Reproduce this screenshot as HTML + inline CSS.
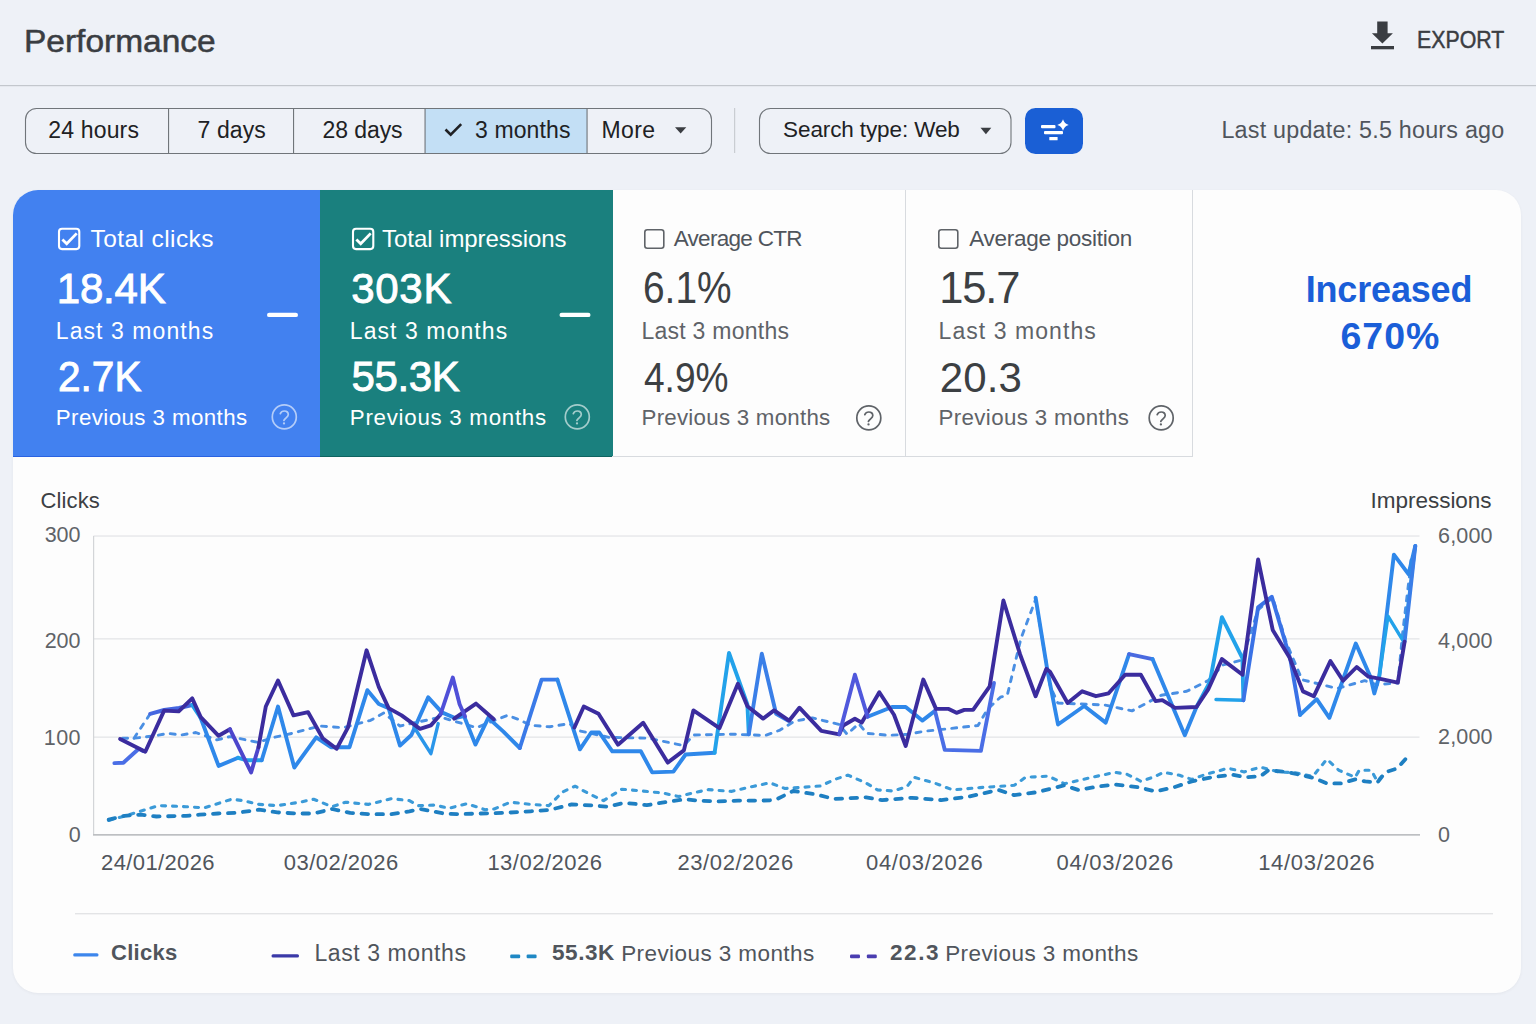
<!DOCTYPE html>
<html><head><meta charset="utf-8">
<style>
*{margin:0;padding:0;box-sizing:border-box}
html,body{width:1536px;height:1024px;overflow:hidden;background:#eef1f7;font-family:"Liberation Sans",sans-serif;color:#3c4043}
.abs{position:absolute}
.t{position:absolute;white-space:nowrap;line-height:1}
</style></head><body>
<svg class="abs" style="left:0;top:0" width="1536" height="190" viewBox="0 0 1536 190">
<path d="M1377.2 21.6h10.4v11.6h5.3l-10.5 10.2-10.5-10.2h5.3z" fill="#3a3d42"/>
<rect x="1371" y="46" width="23" height="3.3" fill="#3a3d42"/>
<rect x="0" y="85" width="1536" height="1.2" fill="#c3c7cd"/>
<rect x="25.5" y="108.5" width="686" height="45" rx="11" fill="none" stroke="#70757a" stroke-width="1.1"/>
<rect x="425" y="109" width="162" height="44" fill="#c3dff5"/>
<rect x="168" y="108.5" width="1.1" height="45" fill="#70757a"/>
<rect x="293" y="108.5" width="1.1" height="45" fill="#70757a"/>
<rect x="424.5" y="108.5" width="1.1" height="45" fill="#70757a"/>
<rect x="586.5" y="108.5" width="1.1" height="45" fill="#70757a"/>
<path d="M445.5 129.5l5.2 5.2 10.5-10.5" stroke="#202124" stroke-width="2.6" fill="none"/>
<path d="M675 127.2h11.3l-5.65 6.4z" fill="#3a3d42"/>
<rect x="734" y="108" width="1.2" height="45" fill="#c9cdd2"/>
<rect x="759.5" y="108.5" width="251.5" height="45" rx="11" fill="none" stroke="#70757a" stroke-width="1.1"/>
<path d="M980.5 127.8h10.8l-5.4 6.4z" fill="#3a3d42"/>
<rect x="1025" y="108" width="58" height="46" rx="10.5" fill="#1a5fd5"/>
<rect x="1041" y="125" width="14.5" height="3.3" rx="1" fill="#fff"/>
<rect x="1044" y="131.1" width="19" height="3.2" rx="1" fill="#fff"/>
<rect x="1049.3" y="137" width="8.3" height="3.2" rx="0.5" fill="#fff"/>
<path d="M1063 119.3Q1064.3 123.7 1068.7 125Q1064.3 126.3 1063 130.7Q1061.7 126.3 1057.3 125Q1061.7 123.7 1063 119.3z" fill="#fff"/>
</svg>
<div class="abs" style="left:13px;top:190px;width:1508px;height:803px;background:#fdfdfd;border-radius:25px;overflow:hidden;box-shadow:0 1px 3px rgba(60,64,67,0.06)">
<div class="abs" style="left:0;top:0;width:307px;height:267px;background:#4281f0;border-bottom:1.5px solid #2a62e0"></div>
<div class="abs" style="left:307px;top:0;width:292.5px;height:267px;background:#1a807e;border-bottom:1.5px solid #0f6461"></div>
<div class="abs" style="left:599px;top:0;width:581px;height:267px;border-right:1.3px solid #d8dbdf;border-bottom:1.3px solid #d8dbdf"></div>
<div class="abs" style="left:891.5px;top:0;width:1.3px;height:267px;background:#d8dbdf"></div>
</div>
<svg class="abs" style="left:55.6px;top:225px" width="26" height="28" viewBox="55.6 225 26 28"><rect x="58.6" y="228.8" width="20.3" height="20.3" rx="3" fill="none" stroke="#fff" stroke-width="2.1"/><path d="M62.0 239.6l4.3 4.2 10-10.4" stroke="#fff" stroke-width="2.8" fill="none"/></svg>
<svg class="abs" style="left:350.3px;top:225px" width="26" height="28" viewBox="350.3 225 26 28"><rect x="353.3" y="228.8" width="20.3" height="20.3" rx="3" fill="none" stroke="#fff" stroke-width="2.1"/><path d="M356.7 239.6l4.3 4.2 10-10.4" stroke="#fff" stroke-width="2.8" fill="none"/></svg>
<svg class="abs" style="left:641.6px;top:225px" width="26" height="28" viewBox="641.6 225 26 28"><rect x="644.4" y="229.8" width="19" height="18.5" rx="2.5" fill="none" stroke="#5f6368" stroke-width="1.6"/></svg>
<svg class="abs" style="left:936.3px;top:225px" width="26" height="28" viewBox="936.3 225 26 28"><rect x="939.0999999999999" y="229.8" width="19" height="18.5" rx="2.5" fill="none" stroke="#5f6368" stroke-width="1.6"/></svg>
<svg class="abs" style="left:0;top:190px" width="1536" height="270" viewBox="0 190 1536 270">
<rect x="267" y="312.7" width="31" height="4.4" rx="2.2" fill="#fff"/>
<rect x="559.5" y="312.7" width="31" height="4.4" rx="2.2" fill="#fff"/>
<circle cx="284.3" cy="416.9" r="12" fill="none" stroke="rgba(255,255,255,0.6)" stroke-width="1.7"/>
<path transform="translate(284.3,416.9)" d="M-4,-3.3C-3.2,-5.2 -1.6,-5.9 0,-5.9C2.4,-5.9 4,-4.3 4,-2.4C4,-0.5 2.2,0.6 1,1.8C0.2,2.6 -0.3,3.2 -0.4,3.6" fill="none" stroke="rgba(255,255,255,0.6)" stroke-width="1.7" stroke-linecap="round"/><circle cx="284.0" cy="423.4" r="1.15" fill="rgba(255,255,255,0.6)"/>
<circle cx="577.3" cy="416.9" r="12" fill="none" stroke="rgba(255,255,255,0.6)" stroke-width="1.7"/>
<path transform="translate(577.3,416.9)" d="M-4,-3.3C-3.2,-5.2 -1.6,-5.9 0,-5.9C2.4,-5.9 4,-4.3 4,-2.4C4,-0.5 2.2,0.6 1,1.8C0.2,2.6 -0.3,3.2 -0.4,3.6" fill="none" stroke="rgba(255,255,255,0.6)" stroke-width="1.7" stroke-linecap="round"/><circle cx="577.0" cy="423.4" r="1.15" fill="rgba(255,255,255,0.6)"/>
<circle cx="868.8" cy="417.9" r="12" fill="none" stroke="#5f6368" stroke-width="1.7"/>
<path transform="translate(868.8,417.9)" d="M-4,-3.3C-3.2,-5.2 -1.6,-5.9 0,-5.9C2.4,-5.9 4,-4.3 4,-2.4C4,-0.5 2.2,0.6 1,1.8C0.2,2.6 -0.3,3.2 -0.4,3.6" fill="none" stroke="#5f6368" stroke-width="1.7" stroke-linecap="round"/><circle cx="868.5" cy="424.4" r="1.15" fill="#5f6368"/>
<circle cx="1161.2" cy="417.9" r="12" fill="none" stroke="#5f6368" stroke-width="1.7"/>
<path transform="translate(1161.2,417.9)" d="M-4,-3.3C-3.2,-5.2 -1.6,-5.9 0,-5.9C2.4,-5.9 4,-4.3 4,-2.4C4,-0.5 2.2,0.6 1,1.8C0.2,2.6 -0.3,3.2 -0.4,3.6" fill="none" stroke="#5f6368" stroke-width="1.7" stroke-linecap="round"/><circle cx="1160.9" cy="424.4" r="1.15" fill="#5f6368"/>
</svg>
<svg class="abs" style="left:0;top:0" width="1536" height="1024" viewBox="0 0 1536 1024">
<rect x="93.5" y="535.4" width="1326" height="1.3" fill="#e4e5e8"/>
<rect x="93.5" y="638.1999999999999" width="1326" height="1.3" fill="#e4e5e8"/>
<rect x="93.5" y="736.5" width="1326" height="1.3" fill="#e4e5e8"/>
<rect x="93" y="536" width="1.2" height="299" fill="#d3d5d8"/>
<rect x="93" y="834" width="1327" height="1.7" fill="#bdbfc2"/>
<rect x="75" y="913" width="1418" height="1.4" fill="#e3e4e6"/>
<polyline points="108.7,820.4 129.2,814.7 158.8,805.6 186.1,806.7 204.4,807.8 231.7,799.2 243.1,800.6 259,804.4 277.3,805.6 300.1,802.2 313.7,799.2 332,806.7 345.6,802.2 368.4,804.4 391.2,798.7 409.4,800.6 418.5,805.6 435,805.1 448.7,808.3 466.9,803.7 485.1,809.7 494.2,809 510.2,802.2 530.7,804.4 548.9,805.6 562.6,791.9 575.1,786.2 589.9,794.2 603.6,800.6 621.8,789.2 640.1,790.8 662.8,793 678.8,796.5 692.5,793 708.4,789.6 731.2,791.4 754,786.2 769.9,782.8 785,788.5 797.8,787.6 820.6,786 834.2,779.6 847.9,775.1 866.1,783 877.5,789.9 893.5,791 907.1,786.5 914,777.3 934.5,783 952.7,789.9 980.1,787.6 1014.2,785.3 1025.6,777.3 1048.4,776.2 1064.4,783.7 1094,776.9 1115,772.3 1127.1,774.3 1141.2,781.4 1155.4,776.3 1163.4,772.3 1179.6,775.3 1191.7,779.4 1205.8,774.3 1228,768.3 1244.2,771.9 1260.3,767.2 1278.5,771.9 1294.6,772.7 1312.8,776.3 1326.9,759.2 1339,770.3 1355.2,777.3 1359.2,770.3 1371.3,770.3 1377.4,781.4 1385.4,772.3" fill="none" stroke="#3b9ad8" stroke-width="3.1" stroke-linejoin="round" stroke-linecap="round" stroke-dasharray="4 7" opacity="1"/>
<polyline points="108.7,819.7 124.6,815.8 140.6,814.7 156.5,816.5 186.1,815.8 199.8,814.7 218,813.5 236.3,812.9 259,809.7 277.3,812.4 295.5,813.5 313.7,813.5 332,809 350.2,812.9 368.4,814.2 391.2,814.2 409.4,811.3 420.8,809 443.6,813.5 457.8,814.2 480.6,813.5 503.4,812.9 530.7,811.3 548.9,810.1 571.7,804.4 594.5,805.6 608.2,806.7 624.1,802.8 646.9,805.1 669.7,801.5 685.6,799.2 697,800.6 717.5,801.5 738,800.6 760.8,800.6 775,800.1 793.2,791 816,794.4 834.2,799 866.1,797.4 882.1,800.1 911.7,797.8 941.3,800.1 968.7,796.7 998.3,789.9 1014.2,795.1 1037,792.2 1064.4,785.3 1078,789.9 1098.5,786.5 1115,784.4 1139.2,787.4 1155.4,791.5 1173.5,787.4 1191.7,781.4 1211.9,777.3 1232.1,774.7 1246.2,777.3 1260.3,776.3 1268.4,770.3 1286.5,771.9 1306.7,776.3 1314.8,778.3 1326.9,783.4 1341,783.4 1355.2,779.4 1365.3,781.4 1377.4,782.4 1385.4,772.3 1397.5,768.3 1409.7,754.1" fill="none" stroke="#1e7fc2" stroke-width="3.8" stroke-linejoin="round" stroke-linecap="round" stroke-dasharray="6.5 8.5" opacity="1"/>
<polyline points="122.6,738.2 134,738.2 155.1,735.8 168.1,733.4 181.1,735 195.8,732.5 217,739.9 230,736.6 257.6,742.3 273.9,737.4 291.8,733.4 319.5,726 343,727.7 370.7,720.3 383.7,713 400,726 440.7,717.1 465.1,724.4 476.5,727.7 492.8,721.1 507.4,715.4 518.8,719.5 530.2,725.2 549.7,726.8 569.3,723.6 579.8,730.9 609,737.4 648.1,738.2 683.9,745.6 693.7,735 732.8,734.2 765.3,735.5 780,730.1 794.6,721.1 812.5,717.9 839.3,724.5 847.1,734.3 858.8,723.6 866.6,733.3 888.1,735.3 907.7,734.3 923.3,731.4 978,725.5 987.7,708.9 1000.4,697.2 1007.3,695.2 1020.9,638.6 1035.6,599.5 1050.2,686.4 1057.8,703 1104.7,705 1132,710.9 1161.3,695.2 1186.7,691.3 1208.2,680.6 1222.9,665 1242,660 1258,610 1272.7,597.6 1286.3,642.5 1302,679.7 1337.2,688.5 1364.6,680.7 1376.3,684.6 1398,683 1402.3,636 1409.8,573 1411,560" fill="none" stroke="#4a8fe3" stroke-width="2.9" stroke-linejoin="round" stroke-linecap="round" stroke-dasharray="5 7" opacity="1"/>
<polyline points="134,738.2 150.2,713.8" fill="none" stroke="#4a8fe3" stroke-width="2.9" stroke-linejoin="round" stroke-linecap="round" stroke-dasharray="5 7" opacity="1"/>
<polyline points="1216,699.5 1243.4,700.2" fill="none" stroke="#22a2ea" stroke-width="3.4" stroke-linejoin="round" stroke-linecap="round" opacity="1"/>
<polyline points="114.4,763.1 123.4,762.7 138.8,748.8 143,751" fill="none" stroke="#4a6ee6" stroke-width="3.9" stroke-linejoin="round" stroke-linecap="round" opacity="1"/>
<polyline points="150.2,713.8 164.1,710.0 179.0,708.0 192.2,705.0" fill="none" stroke="#4566e0" stroke-width="3.9" stroke-linejoin="round" stroke-linecap="round" opacity="1"/>
<polyline points="192.2,705.0 200.7,718.0" fill="none" stroke="#22a0ea" stroke-width="3.9" stroke-linejoin="round" stroke-linecap="round" opacity="1"/>
<polyline points="200.7,718.0 218.6,765.9 238.1,757.8" fill="none" stroke="#2f88ea" stroke-width="3.9" stroke-linejoin="round" stroke-linecap="round" opacity="1"/>
<polyline points="238.1,757.8 246.2,760.2 261.7,760.2" fill="none" stroke="#22a0ea" stroke-width="3.9" stroke-linejoin="round" stroke-linecap="round" opacity="1"/>
<polyline points="261.7,760.2 278.0,706.5 294.3,767.5 316.2,737.4 330.9,747.2 349.5,747.2 367.4,690.2 378.8,704.0 388.6,708.1 400.0,745.6 411.4,735.0 428.2,697.4 441.9,712.4 455.0,718.0 464.0,716.0 475.4,744.6 488.3,717.9 503.4,731.6 519.8,748.0" fill="none" stroke="#2f88ea" stroke-width="3.9" stroke-linejoin="round" stroke-linecap="round" opacity="1"/>
<polyline points="519.8,748.0 541.6,679.6 557.4,679.6" fill="none" stroke="#3a7ae8" stroke-width="3.9" stroke-linejoin="round" stroke-linecap="round" opacity="1"/>
<polyline points="557.4,679.6 579.9,749.3 591.2,732.5 599.3,732.5 612.3,751.3 640.8,751.3 652.2,772.4 673.4,771.6 685.6,754.5 714.6,752.8" fill="none" stroke="#2f88ea" stroke-width="3.9" stroke-linejoin="round" stroke-linecap="round" opacity="1"/>
<polyline points="714.6,752.8 729.0,653.0 747.4,704.3 748.8,734.3" fill="none" stroke="#22a2ea" stroke-width="3.9" stroke-linejoin="round" stroke-linecap="round" opacity="1"/>
<polyline points="748.8,734.3 761.8,653.7 776.1,713.8 788.4,720.7" fill="none" stroke="#3a7fe8" stroke-width="3.9" stroke-linejoin="round" stroke-linecap="round" opacity="1"/>
<polyline points="867.6,716.7 892.0,707.0 905.7,707.0 922.3,720.6 935.0,710.9" fill="none" stroke="#2f88ea" stroke-width="3.9" stroke-linejoin="round" stroke-linecap="round" opacity="1"/>
<polyline points="935.0,710.9 944.8,749.9 980.9,750.9 994.0,683.0" fill="none" stroke="#4a6ee6" stroke-width="3.9" stroke-linejoin="round" stroke-linecap="round" opacity="1"/>
<polyline points="1035.6,597.6 1047.3,669.8 1058.0,724.5 1084.2,706.0 1105.7,722.6 1129.1,654.2" fill="none" stroke="#2f88ea" stroke-width="3.9" stroke-linejoin="round" stroke-linecap="round" opacity="1"/>
<polyline points="1129.1,654.2 1152.5,659.1" fill="none" stroke="#4a6ae0" stroke-width="3.9" stroke-linejoin="round" stroke-linecap="round" opacity="1"/>
<polyline points="1152.5,659.1 1184.8,735.3 1196.5,707.0" fill="none" stroke="#2f88ea" stroke-width="3.9" stroke-linejoin="round" stroke-linecap="round" opacity="1"/>
<polyline points="1196.5,707.0 1210.0,681.6 1221.9,617.1 1242.4,658.1 1243.4,700.2" fill="none" stroke="#22a2ea" stroke-width="3.9" stroke-linejoin="round" stroke-linecap="round" opacity="1"/>
<polyline points="1243.4,700.2 1258.1,607.4 1271.8,596.7 1290.3,659.2 1300.1,714.8" fill="none" stroke="#3a72e6" stroke-width="3.9" stroke-linejoin="round" stroke-linecap="round" opacity="1"/>
<polyline points="1300.1,714.8 1316.7,699.2 1329.4,717.8 1355.8,643.5 1370.4,676.7 1374.3,693.4 1379.2,676.7 1393.9,554.7 1408.5,574.2 1415.3,545.9" fill="none" stroke="#2f88ea" stroke-width="3.9" stroke-linejoin="round" stroke-linecap="round" opacity="1"/>
<polyline points="1379.2,676.7 1388,616.2 1403.6,641.6 1415.3,545.9" fill="none" stroke="#22a2ea" stroke-width="3.4" stroke-linejoin="round" stroke-linecap="round" opacity="1"/>
<polyline points="1404.6,641.6 1415.3,545.9" fill="none" stroke="#3a7ee8" stroke-width="3.9" stroke-linejoin="round" stroke-linecap="round" opacity="1"/>
<polyline points="414,727 430.9,753.7 438.2,723.6" fill="none" stroke="#2a96ea" stroke-width="3.4" stroke-linejoin="round" stroke-linecap="round" opacity="1"/>
<polyline points="120.1,739.0 145.3,751.7 164.1,710.6 178.7,711.4 192.2,698.4 200.7,717.1 218.6,735.8 230.0,729.3" fill="none" stroke="#3b2c9e" stroke-width="3.9" stroke-linejoin="round" stroke-linecap="round" opacity="1"/>
<polyline points="230.0,729.3 251.1,772.4 258.5,747.2" fill="none" stroke="#4d46cc" stroke-width="3.9" stroke-linejoin="round" stroke-linecap="round" opacity="1"/>
<polyline points="258.5,747.2 265.8,706.5 278.0,680.5 293.5,715.4 308.1,712.2 322.7,738.2 336.6,748.8 347.9,727.7 366.6,650.3 378.8,687.0 388.6,708.1 401.6,715.4 420.0,728.8 430.9,725.4 440.5,714.5" fill="none" stroke="#3b2c9e" stroke-width="3.9" stroke-linejoin="round" stroke-linecap="round" opacity="1"/>
<polyline points="454.2,718.6 476,703.6 493.8,719.3" fill="none" stroke="#3b2c9e" stroke-width="3.9" stroke-linejoin="round" stroke-linecap="round" opacity="1"/>
<polyline points="574.4,727.5 583.8,706.5 598.5,713.8 618,744.7 643.2,722.8 667.7,762.6 683.9,750.4 693.4,710.4 719.4,728.2 737.9,683.8 747.4,706.3 763.1,718.6 774.1,710.4 789.1,720.7 799.4,707.7 821.3,730.9 839.3,734.3 843.2,725.5 854.9,718.7 861.8,722.6 879.3,692.3 894,714.8 905.7,746 923.3,679.6 936,708.9 948.7,708.9 956.5,712.8 964.3,709.9 973.1,709.9 989.7,686.4 1003.4,600.5 1020,654.2 1035.6,696.2 1046.3,668.9 1050,671.8 1067.6,703 1082.2,691.3 1095.9,696.2 1108.6,693.3 1125.2,674.7 1140.8,674.7 1155.5,701.1 1162.3,700.1 1175,707.9 1196.5,707 1208.2,689.4 1221.9,659.1 1242.5,674.8 1258.1,559.5 1272.7,629.9 1289.4,657.2 1303,691.4 1313.8,696.3 1330.4,661.1 1343.1,680.7 1356.7,667 1368.5,676.7 1379.2,678.7 1397.8,682.6 1404.6,641.6" fill="none" stroke="#3b2c9e" stroke-width="3.9" stroke-linejoin="round" stroke-linecap="round" opacity="1"/>
<polyline points="440.5,714.5 452.8,677.6 459.6,704.2 465.1,716.5" fill="none" stroke="#5050d8" stroke-width="3.9" stroke-linejoin="round" stroke-linecap="round" opacity="1"/>
<polyline points="839.3,734.3 854.9,674.7 867.6,716.7" fill="none" stroke="#5058dc" stroke-width="3.9" stroke-linejoin="round" stroke-linecap="round" opacity="1"/>
<rect x="73.2" y="953.3" width="25.3" height="3.2" rx="1.5" fill="#3d86ec"/>
<rect x="271.5" y="954.3" width="27.5" height="3.2" rx="1.5" fill="#3b3aa8"/>
<rect x="510.2" y="954.5" width="10" height="3.8" rx="1.2" fill="#1f88c4"/><rect x="526.6" y="954.5" width="10" height="3.8" rx="1.2" fill="#1f88c4"/>
<rect x="850" y="954.5" width="10" height="3.8" rx="1.2" fill="#4a3db0"/><rect x="866.8" y="954.5" width="10" height="3.8" rx="1.2" fill="#4a3db0"/>
</svg>
<div class="t" style="left:23.9px;top:26.2px;font-size:31px;font-weight:normal;color:#3a3d42;letter-spacing:0.0px;transform:scaleX(1.08);transform-origin:0 0;-webkit-text-stroke:0.5px #3a3d42;">Performance</div>
<div class="t" style="left:1416.6px;top:28.8px;font-size:23px;font-weight:normal;color:#3a3d42;letter-spacing:0.0px;-webkit-text-stroke:0.45px #3a3d42;transform:scaleX(0.927);transform-origin:0 0;">EXPORT</div>
<div class="t" style="left:48.3px;top:118.8px;font-size:23px;font-weight:normal;color:#202124;letter-spacing:0.163px;">24 hours</div>
<div class="t" style="left:197.6px;top:118.8px;font-size:23px;font-weight:normal;color:#202124;letter-spacing:0.096px;">7 days</div>
<div class="t" style="left:322.6px;top:118.8px;font-size:23px;font-weight:normal;color:#202124;letter-spacing:-0.09px;">28 days</div>
<div class="t" style="left:475.0px;top:118.8px;font-size:23px;font-weight:normal;color:#202124;letter-spacing:0.11px;">3 months</div>
<div class="t" style="left:601.5px;top:118.8px;font-size:23px;font-weight:normal;color:#202124;letter-spacing:0.36px;">More</div>
<div class="t" style="left:783.1px;top:119.2px;font-size:22.5px;font-weight:normal;color:#202124;letter-spacing:-0.114px;">Search type: Web</div>
<div class="t" style="left:1221.4px;top:119.3px;font-size:23.3px;font-weight:normal;color:#50555c;letter-spacing:0.226px;">Last update: 5.5 hours ago</div>
<div class="t" style="left:90.6px;top:227.0px;font-size:24.5px;font-weight:normal;color:#ffffff;letter-spacing:0.402px;">Total clicks</div>
<div class="t" style="left:56.8px;top:267.8px;font-size:42px;font-weight:normal;color:#ffffff;letter-spacing:-0.21px;-webkit-text-stroke:0.9px #ffffff;">18.4K</div>
<div class="t" style="left:55.8px;top:319.6px;font-size:23px;font-weight:normal;color:#ffffff;letter-spacing:1.076px;">Last 3 months</div>
<div class="t" style="left:57.7px;top:355.8px;font-size:42px;font-weight:normal;color:#ffffff;letter-spacing:0.0px;-webkit-text-stroke:0.9px #ffffff;transform:scaleX(0.9659);transform-origin:0 0;">2.7K</div>
<div class="t" style="left:55.8px;top:406.6px;font-size:22.3px;font-weight:normal;color:#ffffff;letter-spacing:0.421px;">Previous 3 months</div>
<div class="t" style="left:382.1px;top:227.4px;font-size:24px;font-weight:normal;color:#ffffff;letter-spacing:-0.057px;">Total impressions</div>
<div class="t" style="left:351.2px;top:267.8px;font-size:42px;font-weight:normal;color:#ffffff;letter-spacing:0.72px;-webkit-text-stroke:0.9px #ffffff;">303K</div>
<div class="t" style="left:349.8px;top:319.6px;font-size:23px;font-weight:normal;color:#ffffff;letter-spacing:1.076px;">Last 3 months</div>
<div class="t" style="left:351.6px;top:355.8px;font-size:42px;font-weight:normal;color:#ffffff;letter-spacing:-0.374px;-webkit-text-stroke:0.9px #ffffff;">55.3K</div>
<div class="t" style="left:349.8px;top:406.6px;font-size:22.3px;font-weight:normal;color:#ffffff;letter-spacing:0.73px;">Previous 3 months</div>
<div class="t" style="left:673.7px;top:227.6px;font-size:22.5px;font-weight:normal;color:#50555c;letter-spacing:-0.708px;">Average CTR</div>
<div class="t" style="left:643.2px;top:266.8px;font-size:43.5px;font-weight:normal;color:#3c4043;letter-spacing:0.0px;transform:scaleX(0.8938);transform-origin:0 0;">6.1%</div>
<div class="t" style="left:641.5px;top:319.6px;font-size:23px;font-weight:normal;color:#5f6368;letter-spacing:0.251px;">Last 3 months</div>
<div class="t" style="left:643.6px;top:356.8px;font-size:42px;font-weight:normal;color:#3c4043;letter-spacing:0.0px;transform:scaleX(0.8828);transform-origin:0 0;">4.9%</div>
<div class="t" style="left:641.5px;top:406.6px;font-size:22.3px;font-weight:normal;color:#5f6368;letter-spacing:0.255px;">Previous 3 months</div>
<div class="t" style="left:969.2px;top:227.6px;font-size:22.5px;font-weight:normal;color:#50555c;letter-spacing:-0.28px;">Average position</div>
<div class="t" style="left:939.2px;top:266.8px;font-size:43.5px;font-weight:normal;color:#3c4043;letter-spacing:-1.14px;">15.7</div>
<div class="t" style="left:938.6px;top:319.6px;font-size:23px;font-weight:normal;color:#5f6368;letter-spacing:1.059px;">Last 3 months</div>
<div class="t" style="left:939.7px;top:356.8px;font-size:42px;font-weight:normal;color:#3c4043;letter-spacing:0.16px;">20.3</div>
<div class="t" style="left:938.6px;top:406.6px;font-size:22.3px;font-weight:normal;color:#5f6368;letter-spacing:0.354px;">Previous 3 months</div>
<div class="t" style="left:1305.7px;top:272.2px;font-size:36px;font-weight:bold;color:#1a5ed8;letter-spacing:-0.166px;">Increased</div>
<div class="t" style="left:1340.6px;top:318.1px;font-size:37.5px;font-weight:bold;color:#1a5ed8;letter-spacing:0.92px;">670%</div>
<div class="t" style="left:40.6px;top:490.0px;font-size:22px;font-weight:normal;color:#3c4043;letter-spacing:0.12px;">Clicks</div>
<div class="t" style="left:1370.6px;top:489.6px;font-size:22.5px;font-weight:normal;color:#3c4043;letter-spacing:-0.032px;">Impressions</div>
<div class="t" style="left:44.7px;top:525.0px;font-size:21.5px;font-weight:normal;color:#5f6368;letter-spacing:-0.06px;">300</div>
<div class="t" style="left:44.7px;top:631.3px;font-size:21.5px;font-weight:normal;color:#5f6368;letter-spacing:-0.06px;">200</div>
<div class="t" style="left:43.8px;top:728.3px;font-size:21.5px;font-weight:normal;color:#5f6368;letter-spacing:0.39px;">100</div>
<div class="t" style="left:68.7px;top:825.3px;font-size:21.5px;font-weight:normal;color:#5f6368;letter-spacing:-2.16px;">0</div>
<div class="t" style="left:1438.1px;top:526.0px;font-size:21.5px;font-weight:normal;color:#5f6368;letter-spacing:0.15px;">6,000</div>
<div class="t" style="left:1438.1px;top:631.3px;font-size:21.5px;font-weight:normal;color:#5f6368;letter-spacing:0.15px;">4,000</div>
<div class="t" style="left:1438.1px;top:727.3px;font-size:21.5px;font-weight:normal;color:#5f6368;letter-spacing:0.15px;">2,000</div>
<div class="t" style="left:1438.1px;top:825.3px;font-size:21.5px;font-weight:normal;color:#5f6368;letter-spacing:12.6px;">0</div>
<div class="t" style="left:101.1px;top:852.0px;font-size:22px;font-weight:normal;color:#50555c;letter-spacing:0.37px;">24/01/2026</div>
<div class="t" style="left:283.8px;top:852.0px;font-size:22px;font-weight:normal;color:#50555c;letter-spacing:0.47px;">03/02/2026</div>
<div class="t" style="left:487.4px;top:852.0px;font-size:22px;font-weight:normal;color:#50555c;letter-spacing:0.49px;">13/02/2026</div>
<div class="t" style="left:677.4px;top:852.0px;font-size:22px;font-weight:normal;color:#50555c;letter-spacing:0.63px;">23/02/2026</div>
<div class="t" style="left:865.9px;top:852.0px;font-size:22px;font-weight:normal;color:#50555c;letter-spacing:0.75px;">04/03/2026</div>
<div class="t" style="left:1056.5px;top:852.0px;font-size:22px;font-weight:normal;color:#50555c;letter-spacing:0.73px;">04/03/2026</div>
<div class="t" style="left:1258.2px;top:852.0px;font-size:22px;font-weight:normal;color:#50555c;letter-spacing:0.69px;">14/03/2026</div>
<div class="t" style="left:111.1px;top:942.4px;font-size:22px;font-weight:bold;color:#50555c;letter-spacing:0.248px;">Clicks</div>
<div class="t" style="left:314.4px;top:942.1px;font-size:23px;font-weight:normal;color:#50555c;letter-spacing:0.59px;">Last 3 months</div>
<div class="t" style="left:552.0px;top:942.0px;font-size:22.5px;font-weight:bold;color:#50555c;letter-spacing:0.566px;">55.3K</div>
<div class="t" style="left:621.2px;top:942.5px;font-size:22.5px;font-weight:normal;color:#50555c;letter-spacing:0.418px;">Previous 3 months</div>
<div class="t" style="left:890.0px;top:942.0px;font-size:22.5px;font-weight:bold;color:#50555c;letter-spacing:1.56px;">22.3</div>
<div class="t" style="left:945.2px;top:942.5px;font-size:22.5px;font-weight:normal;color:#50555c;letter-spacing:0.418px;">Previous 3 months</div>
</body></html>
